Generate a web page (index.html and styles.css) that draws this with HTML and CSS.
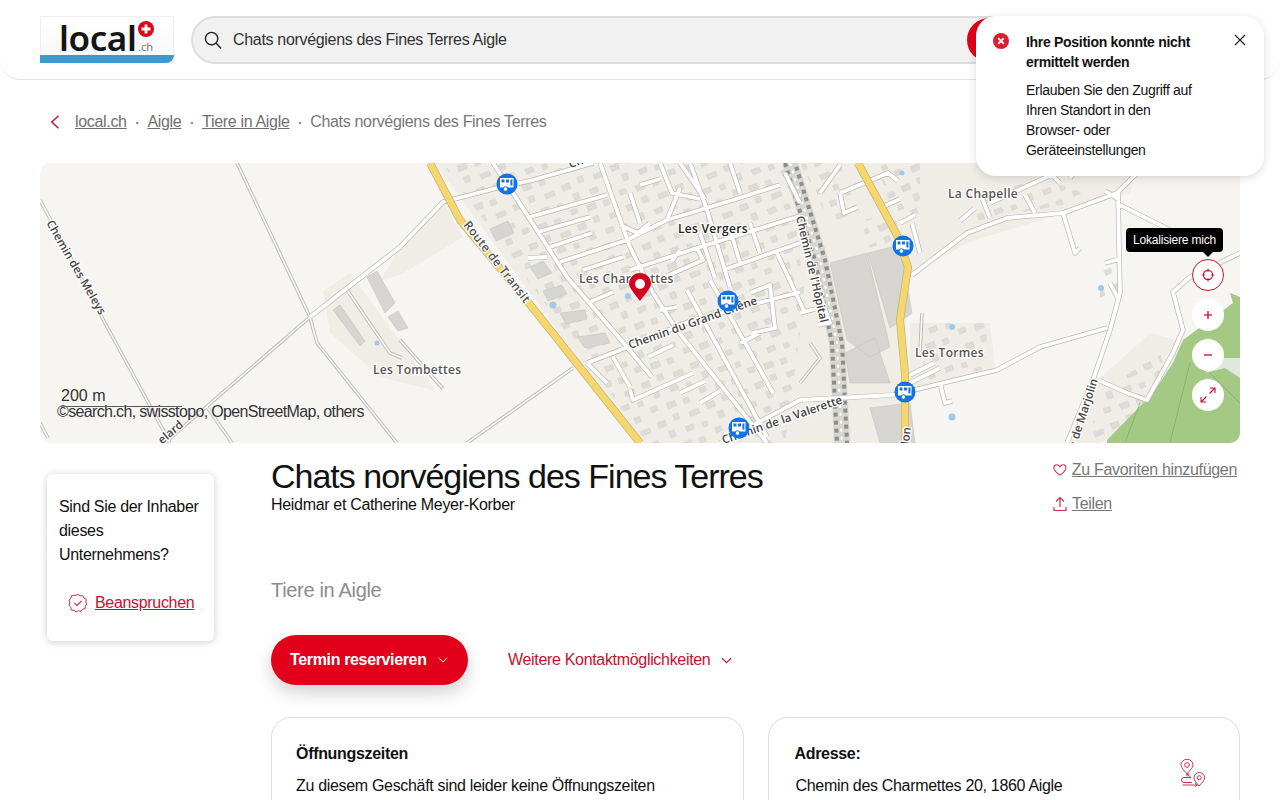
FILE: index.html
```html
<!DOCTYPE html>
<html lang="de">
<head>
<meta charset="utf-8">
<title>Chats norvégiens des Fines Terres</title>
<link rel="stylesheet" href="styles.css">
</head>
<body>
<header class="site-header">
  <a class="logo">
    <span class="logo-word">local</span><span class="logo-ch">.ch</span>
    <svg class="logo-cross" viewBox="0 0 16 16" width="16" height="16"><circle cx="8" cy="8" r="8" fill="#e2001a"/><path d="M6.6 3.5h2.8v3.1h3.1v2.8H9.4v3.1H6.6V9.4H3.5V6.6h3.1z" fill="#fff"/></svg>
    <span class="logo-band"></span>
  </a>
  <div class="search">
    <svg class="search-icon" viewBox="0 0 18 18" width="18" height="18"><circle cx="7.6" cy="7.6" r="6.2" fill="none" stroke="#222" stroke-width="1.4"/><path d="M12 12l5 5.4" stroke="#222" stroke-width="1.4" fill="none"/></svg>
    <span class="search-text">Chats norvégiens des Fines Terres Aigle</span>
    <span class="search-btn"></span>
  </div>
</header>

<nav class="crumbs">
  <svg class="crumb-back" viewBox="0 0 10 14" width="10" height="14"><path d="M8.5 .8L1.8 7l6.7 6.2" fill="none" stroke="#c8102e" stroke-width="1.4"/></svg>
  <a class="crumb-link">local.ch</a><span class="dot">•</span>
  <a class="crumb-link">Aigle</a><span class="dot">•</span>
  <a class="crumb-link">Tiere in Aigle</a><span class="dot">•</span>
  <span class="crumb-current">Chats norvégiens des Fines Terres</span>
</nav>

<section class="map">
  <svg class="map-svg" viewBox="0 0 1200 280" width="1200" height="280">
    <defs>
      <pattern id="blds" width="64" height="52" patternUnits="userSpaceOnUse" patternTransform="rotate(-22) scale(.82)">
        <g fill="#dedcd6" stroke="#cfcdc6" stroke-width=".6">
          <rect x="3" y="4" width="10" height="7"/><rect x="24" y="2" width="7" height="7"/><rect x="44" y="6" width="12" height="6"/>
          <rect x="12" y="19" width="7" height="8"/><rect x="33" y="21" width="10" height="6"/><rect x="54" y="24" width="6" height="6"/>
          <rect x="2" y="36" width="8" height="6"/><rect x="22" y="38" width="11" height="7"/><rect x="43" y="40" width="7" height="7"/>
        </g>
      </pattern>
      <path id="roads" d="M270 154L360 84M453 0L473 30L527 114L587 184L612 214M560 0L590 84L613 130L637 167L727 280M650 0L667 47L690 124M360 84L403 39L457 25L493 17L553 0M547 200L593 182L653 157L760 129M547 200L567 220M490 54L567 32M498 69L550 54M510 84L552 70M520 99L587 77L627 57L693 37L740 22M488 95L507 94M543 107L583 94M590 107L657 85L760 53M657 85L663 97L627 113M683 107L760 80M550 139L573 129M620 147L637 144M590 227L593 237L653 210M573 194L590 224M608 194L633 182M647 127L727 274M670 117L733 230M680 280L760 237L853 232L957 207L1000 184L1067 165M1078 30L1080 130L1070 167L1053 217L1027 280M872 112L927 70L967 55L1023 50L1077 30L1093 14M1080 42L1130 67L1170 90M1200 90L1150 114L1133 129L1143 167L1133 190L1107 237L1087 230L1058 217M1093 14L1110 0M590 30L600 60M620 0L632 30L660 36M690 0L700 30M627 57L640 25M780 30L800 2M745 10L760 40M800 30L848 10L858 18M800 30L804 50L818 44M842 44L860 36M860 60L875 52M880 90L872 60M1023 50L1035 90L1040 85M1040 0L1030 15M1000 0L1020 20M1065 28L1078 36M950 40L1020 8M985 32L995 50M920 58L935 45M950 55L940 30M1065 100L1080 96M1070 120L1078 135M870 220L900 205M870 212L894 200M900 220L905 240L912 238M760 150L775 146M780 132L790 160L778 162M737 90L765 150M675 115L660 70M700 100L690 66M720 90L710 60M632 98L640 87M610 60L598 70L580 62M600 22L620 16M640 0L665 36M700 180L720 170M640 230L665 218M660 240L680 228M710 130L730 122L735 165L712 170"/>
      <path id="thin" d="M0 37L7 50L65 160L127 274L130 280M197 0L270 154L277 180L357 280M270 154L143 264L125 280M167 244L192 280M427 280L533 205M305 124L350 190L362 195M360 177L403 226M0 260L8 275M770 180L780 195L760 220M880 190L882 150"/>
      <g id="bus">
        <circle r="10.5" fill="#1173e6"/>
        <path d="M-7-6H6.5V3.5H-7z" fill="#fff"/>
        <path d="M-5.5-4.5h3v3h-3zM-1-4.5h3v3h-3zM3.4-4.5H5.4v6H3.4z" fill="#1173e6"/>
        <circle cx="-1.5" cy="5" r="2.3" fill="#fff" stroke="#1173e6"/>
      </g>
    </defs>
    <rect width="1200" height="280" fill="#f6f5f2"/>
    <path class="area" d="M395 0L600 280H860L868 112L932 78L1090 30L1098 0z"/>
    <path class="area" d="M360 112L423 74L403 39L360 84L340 118zM283 128L310 110L396 228L340 214L290 170z"/>
    <path class="area" d="M870 160H950L955 205L880 225L870 230zM1058 217L1110 170L1150 180L1130 240L1060 280H1030z"/>
    <path d="M402 0L607 280H745L765 135L748 0zM800 0L830 85L862 75L836 0zM880 160H945L950 205L885 222zM925 60L1060 35L1000 15L950 30zM1060 100H1078V135H1060zM1060 230L1120 190L1130 225L1090 275H1050zM760 0H880V50L790 60z" fill="url(#blds)"/>
    <path class="bldg" d="M327 114L337 108L355 140L345 150zM293 147L300 142L325 178L320 183zM348 154L358 148L368 165L358 168z"/>
    <path class="bldg" d="M450 66L468 58L474 70L456 78zM490 104L503 98L512 110L498 116zM503 128L522 122L527 131L508 138zM520 150L545 147L547 156L526 161zM537 174L565 170L570 180L545 185z"/>
    <path class="bldg" d="M790 100L827 90L850 184L830 194L807 177zM828 90L860 82L872 150L850 165zM805 190L835 175L850 220L810 220zM830 245L870 240L875 280H840z"/>
    <circle cx="337" cy="180" r="2.5" fill="#9fc8ea"/><circle cx="513" cy="142" r="3.5" fill="#9fc8ea"/><circle cx="588" cy="133" r="3" fill="#9fc8ea"/><circle cx="912" cy="164" r="3" fill="#9fc8ea"/><circle cx="912" cy="254" r="3.5" fill="#9fc8ea"/><circle cx="1061" cy="125" r="3" fill="#9fc8ea"/><circle cx="862" cy="10" r="2.5" fill="#9fc8ea"/>

    <path class="green" d="M1200 134L1190 130L1193 140L1143 177L1133 200L1113 230L1067 277V280H1200z"/>
    <path d="M1100 240L1085 280M1150 200L1130 280M1170 210L1200 240" stroke="#7fa765" stroke-width=".7" fill="none"/>
    <path d="M1165 210L1185 205L1200 215V195L1180 195z" fill="#dfe7df"/>

    <path d="M750 0L780 97L797 180L802 280" fill="none" stroke="#d8d6d0" stroke-width="16"/>
    <path d="M745 0L775 97L792 180L797 280" fill="none" stroke="#8d8d8b" stroke-width="4" stroke-dasharray="4 4"/>
    <path d="M755 0L785 97L802 180L807 280" fill="none" stroke="#8d8d8b" stroke-width="4" stroke-dasharray="4 4" stroke-dashoffset="4"/>
    <path d="M750 0L780 97L797 180L802 280" fill="none" stroke="#fff" stroke-width="2" stroke-dasharray="3 5"/>

    <use href="#thin" class="thin-case"/><use href="#thin" class="thin-fill"/>
    <use href="#roads" class="road-case"/><use href="#roads" class="road-fill"/>

    <path class="y-case" d="M390 0L420 57L492 144L600 280"/><path class="y-fill" d="M390 0L420 57L492 144L600 280"/>
    <path class="y-case" d="M818 0L857 72L868 104L860 157L865 210L865 280"/><path class="y-fill" d="M818 0L857 72L868 104L860 157L865 210L865 280"/>

    <text class="label strong" x="638" y="70">Les Vergers</text>
    <text class="label" x="539" y="120">Les Charmettes</text>
    <text class="label" x="333" y="211">Les Tombettes</text>
    <text class="label" x="875" y="194">Les Tormes</text>
    <text class="label" x="908" y="35">La Chapelle</text>
    <text class="label road-label" transform="translate(530 5) rotate(-17)">Che</text>
    <text class="label" transform="translate(423 62) rotate(52)">Route de Transit</text>
    <text class="label road-label" transform="translate(590 186) rotate(-19.5)">Chemin du Grand Chêne</text>
    <text class="label road-label" transform="translate(756 54) rotate(77)">Chemin de l'Hôpital</text>
    <text class="label road-label" transform="translate(6 60) rotate(60)">Chemin des Meleys</text>
    <text class="label road-label anchor-end" transform="translate(803 240) rotate(-19)">Chemin de la Valerette</text>
    <text class="label road-label anchor-end" transform="translate(1058 217) rotate(-72)">Chemin de Marjolin</text>
    <text class="label road-label anchor-end" transform="translate(144 263) rotate(-40)">elard</text>
    <text class="label road-label" transform="translate(869 282) rotate(-84)">lon</text>

    <use href="#bus" x="467" y="21"/><use href="#bus" x="688" y="138"/><use href="#bus" x="699" y="265"/><use href="#bus" x="863" y="83"/><use href="#bus" x="865" y="229"/>

    <path d="M600 138C593 129 589 124 589 121A11 11 0 0 1 611 121C611 124 607 129 600 138z" fill="#d5001f"/>
    <circle cx="600" cy="121" r="5" fill="#fff"/>
  </svg>

  <div class="scale">200 m</div>
  <div class="attribution">©search.ch, swisstopo, OpenStreetMap, others</div>

  <div class="tooltip">Lokalisiere mich</div>
  <div class="map-controls">
    <button class="ctl ctl-locate"><svg viewBox="0 0 14 14" width="14" height="14"><circle cx="7" cy="7" r="4.6" fill="none" stroke="#c8102e" stroke-width="1.1"/><path d="M7 .8v3M7 10.2v3M.8 7h3M10.2 7h3" stroke="#c8102e" stroke-width="1.1"/></svg></button>
    <button class="ctl"><svg viewBox="0 0 10 10" width="10" height="10"><path d="M5 1v8M1 5h8" stroke="#d12c55" stroke-width="1.6"/></svg></button>
    <button class="ctl"><svg viewBox="0 0 10 10" width="10" height="10"><path d="M1 5h8" stroke="#d12c55" stroke-width="1.6"/></svg></button>
    <button class="ctl"><svg viewBox="0 0 16 16" width="16" height="16"><path d="M1 15L6.5 9.5M1 10v5h5M15 1L9.5 6.5M10 1h5v5" fill="none" stroke="#b8123c" stroke-width="1.1"/></svg></button>
  </div>
</section>

<main class="content">
  <aside class="side">
    <div class="claim">
      <p class="claim-text">Sind Sie der Inhaber dieses Unternehmens?</p>
      <a class="claim-link">
        <svg viewBox="0 0 20 20" width="20" height="20"><path d="M10 1.5l2.3 1.4 2.6-.2 1.1 2.4 2.3 1.3-.5 2.6L19 11l-1.7 2-.1 2.6-2.6.6L13 18.300l-2.700-.5-2.300 1.200-2-1.700-2.600-.200-.6-2.600L1 12l.8-2.500L1 7l2-1.700.4-2.600 2.700-.1z" fill="none" stroke="#c8304f" stroke-width="1"/><path d="M6.500 10l2.500 2.500 4.500-4.500" fill="none" stroke="#c8304f" stroke-width="1.100"/></svg>
        <span>Beanspruchen</span>
      </a>
    </div>
  </aside>
  <div class="main-col">
    <div class="title-row">
      <div>
        <h1 class="title">Chats norvégiens des Fines Terres</h1>
        <p class="owner">Heidmar et Catherine Meyer-Korber</p>
      </div>
      <div class="actions">
        <a class="action"><svg viewBox="0 0 16 14" width="15" height="14"><path d="M8 13C3 9.500 1 7.300 1 4.600 1 2.500 2.600 1 4.400 1 6 1 7.300 2 8 3.300 8.700 2 10 1 11.600 1 13.400 1 15 2.500 15 4.600 15 7.300 13 9.500 8 13z" fill="none" stroke="#c8304f" stroke-width="1.200"/></svg><span>Zu Favoriten hinzufügen</span></a>
        <a class="action"><svg viewBox="0 0 14 16" width="14" height="16"><path d="M7 11V1.500M3 5.500l4-4 4 4M1 11v3.500h12V11" fill="none" stroke="#c8304f" stroke-width="1.200"/></svg><span>Teilen</span></a>
      </div>
    </div>
    <p class="category">Tiere in Aigle</p>
    <div class="cta-row">
      <button class="cta">Termin reservieren<svg viewBox="0 0 10 6" width="10" height="6"><path d="M.8.8L5 5l4.200-4.200" fill="none" stroke="#fff" stroke-width="1"/></svg></button>
      <a class="more">Weitere Kontaktmöglichkeiten<svg viewBox="0 0 10 6" width="11" height="7"><path d="M.8.8L5 5l4.200-4.200" fill="none" stroke="#c8102e" stroke-width="1"/></svg></a>
    </div>
    <div class="cards">
      <div class="card">
        <h2 class="card-title">Öffnungszeiten</h2>
        <p class="card-text">Zu diesem Geschäft sind leider keine Öffnungszeiten verfügbar.</p>
      </div>
      <div class="card card-address">
        <div>
          <h2 class="card-title">Adresse:</h2>
          <p class="card-text">Chemin des Charmettes 20, 1860 Aigle</p>
        </div>
        <svg class="route-icon" viewBox="0 0 28 28" width="28" height="28"><g fill="none" stroke="#c8304f" stroke-width="1"><path d="M8 15C4.500 10.500 2 8.500 2 5.800A6 5.500 0 0 1 14 5.800C14 8.500 11.500 10.500 8 15z"/><circle cx="8" cy="6" r="2.300"/><path d="M20 27C17 23 15 21.500 15 18.800A5.300 5.300 0 0 1 25.600 18.800C25.600 21.500 23.500 23 20 27z"/><circle cx="20.300" cy="18.700" r="2"/><path d="M8 15L12 18.500H5A2 2 0 0 0 5 23.500H13M8 17.500V15H10.500M3.500 26H18M16 24l2.500 2-2.500 1.500"/></g></svg>
      </div>
    </div>
  </div>
</main>

<aside class="toast">
  <svg class="toast-icon" viewBox="0 0 16 16" width="16" height="16"><circle cx="8" cy="8" r="8" fill="#d9202f"/><path d="M5.200 5.200l5.600 5.600M10.800 5.200l-5.600 5.600" stroke="#fff" stroke-width="1.700"/></svg>
  <div class="toast-body">
    <strong class="toast-title">Ihre Position konnte nicht ermittelt werden</strong>
    <p class="toast-text">Erlauben Sie den Zugriff auf Ihren Standort in den Browser- oder Geräteeinstellungen</p>
  </div>
  <svg class="toast-close" viewBox="0 0 12 12" width="12" height="12"><path d="M1 1l10 10M11 1L1 11" stroke="#222" stroke-width="1.300"/></svg>
</aside>
</body>
</html>
```
FILE: styles.css
```css
* { box-sizing: border-box; }
html, body { margin: 0; height: 800px; overflow: hidden; background: #fff; }
body { font-family: "Liberation Sans", Arial, sans-serif; font-size: 16px; color: #111; position: relative; letter-spacing: -0.32px; }
p, h1, h2 { margin: 0; }
a { color: inherit; }

.site-header { height: 80px; padding: 16px 40px 0; display: flex; gap: 17px; align-items: flex-start; background: #fff; border-bottom: 1px solid #e2e2e2; border-radius: 0 0 20px 20px; }
.logo { position: relative; width: 134px; height: 47px; flex: none; background: linear-gradient(#fff, #f7f7f7); box-shadow: inset 0 0 0 1px #eee; display: block; letter-spacing: 0; overflow: hidden; }
.logo-word { position: absolute; left: 19px; top: -1px; font-family: "Noto Sans", sans-serif; font-weight: 600; font-size: 35px; line-height: 46px; color: #151515; letter-spacing: -.4px; }
.logo-ch { position: absolute; left: 98px; top: 24px; font-family: "Noto Sans", sans-serif; font-size: 11px; line-height: 14px; color: #777; }
.logo-cross { position: absolute; left: 98px; top: 5px; }
.logo-band { position: absolute; left: 0; right: 0; bottom: 0; height: 8px; background: #3a9ad1; border-radius: 0 0 10px 0; }

.search { flex: 1; height: 48px; margin-right: 225px; display: flex; align-items: center; padding-left: 11px; background: #f1f1f1; border: 2px solid #dedede; border-radius: 24px; position: relative; }
.search-icon { flex: none; margin-right: 11px; }
.search-text { color: #333; }
.search-btn { position: absolute; right: 2px; top: 0; width: 44px; height: 44px; border-radius: 50%; background: #e2001a; }

.crumbs { height: 83px; padding: 1px 0 0 50px; display: flex; align-items: center; color: #6f6f6f; }
.crumb-back { margin-right: 15px; }
.crumb-link { text-decoration: underline; }
.dot { font-size: 8px; width: 20.7px; text-align: center; color: #777; }
.crumb-current { color: #777; }

.map { position: relative; margin: 0 40px; width: 1200px; height: 280px; border-radius: 10px; overflow: hidden; }
.map-svg { display: block; }
.area { fill: #efede6; }
.bldg { fill: #d6d5d1; stroke: #c6c5c1; stroke-width: .6; }
.green { fill: #a3c985; }
.thin-case { fill: none; stroke: #bdbcb7; stroke-width: 3.6; }
.thin-fill { fill: none; stroke: #fafafa; stroke-width: 1.6; }
.road-case { fill: none; stroke: #b9b8b3; stroke-width: 5.2; stroke-linejoin: round; }
.road-fill { fill: none; stroke: #fff; stroke-width: 3.8; stroke-linejoin: round; }
.y-case { fill: none; stroke: #c9b36d; stroke-width: 8; }
.y-fill { fill: none; stroke: #f6d76f; stroke-width: 6.5; }
.label { font-family: "Open Sans", sans-serif; font-size: 12px; font-weight: 600; fill: #555; stroke: #fff; stroke-width: 2.5px; paint-order: stroke; letter-spacing: .3px; }
.road-label { font-size: 11.5px; letter-spacing: 0; fill: #444; }
.strong { fill: #222; }
.anchor-end { text-anchor: end; }

.scale { position: absolute; left: 21px; top: 224px; width: 121px; height: 20px; font-size: 16px; line-height: 18px; color: #333; border-bottom: 1px solid #555; letter-spacing: 0; }
.attribution { position: absolute; left: 17px; top: 240px; font-size: 16px; line-height: 18px; color: #333; text-shadow: 0 0 2px #fff; letter-spacing: -0.65px; }

.tooltip { position: absolute; left: 1086px; top: 65px; width: 97px; height: 24px; background: #000; color: #fff; border-radius: 4px; font-size: 12px; line-height: 24px; text-align: center; letter-spacing: -.2px; }
.tooltip::after { content: ""; position: absolute; left: 77px; top: 24px; border: 5px solid transparent; border-top-color: #000; border-bottom-width: 0; }
.map-controls { position: absolute; right: 16px; top: 96px; display: flex; flex-direction: column; gap: 8px; }
.ctl { width: 32px; height: 32px; padding: 0; border: 0; border-radius: 50%; background: #fff; display: flex; align-items: center; justify-content: center; }
.ctl-locate { border: 1px solid #c8102e; }

.content { display: flex; padding: 14px 40px 0 47px; }
.side { width: 224px; flex: none; padding-top: 17px; }
.claim { width: 167px; height: 167px; padding: 21px 12px 0; background: #fff; border-radius: 6px; box-shadow: 0 1px 8px rgba(0,0,0,.2); }
.claim-text { line-height: 24px; }
.claim-link { display: flex; align-items: center; gap: 7px; margin: 26px 0 0 9px; color: #c8102e; text-decoration: underline; }

.main-col { flex: 1; min-width: 0; }
.title-row { display: flex; justify-content: space-between; height: 111px; }
.title { font-size: 34px; font-weight: 400; line-height: 38px; letter-spacing: -1px; }
.owner { line-height: 18px; margin-top: 1px; }
.actions { flex: none; display: flex; flex-direction: column; gap: 16px; padding: 4px 3px 0 0; width: 187px; }
.action { display: flex; align-items: center; gap: 5px; height: 18px; color: #777; white-space: nowrap; }
.action span { text-decoration: underline; }
.category { font-size: 20px; line-height: 24px; color: #8c8c8c; margin-top: 10px; }
.cta-row { display: flex; align-items: center; gap: 40px; margin-top: 33px; }
.cta { width: 197px; height: 50px; padding: 0 0 0 19px; border: 0; border-radius: 25px; background: #e2001a; color: #fff; font: bold 16px "Liberation Sans", Arial, sans-serif; letter-spacing: -.35px; display: flex; align-items: center; gap: 11px; box-shadow: 0 8px 18px rgba(0,0,0,.18); }
.more { display: flex; align-items: center; gap: 11px; color: #c8102e; }
.cards { display: grid; grid-template-columns: 1fr 1fr; gap: 24px; margin-top: 32px; }
.card { min-width: 0; height: 200px; padding: 27px 24px 0; border: 1px solid #ddd; border-radius: 20px; }
.card-address { display: flex; justify-content: space-between; padding: 27px 32px 0 26px; }
.card-title { font-size: 16px; line-height: 18px; font-weight: 700; }
.card-text { line-height: 24px; margin-top: 11px; }
.card-address .card-text { margin-left: 1px; }
.route-icon { margin-top: 14px; flex: none; }

.toast { position: absolute; left: 976px; top: 16px; width: 288px; height: 160px; padding: 16px 17px; background: #fff; border-radius: 20px; box-shadow: 0 2px 10px rgba(0,0,0,.14); display: flex; font-size: 14px; letter-spacing: -.3px; line-height: 20px; }
.toast-icon { flex: none; margin: 1px 17px 0 0; }
.toast-body { width: 175px; }
.toast-title { display: block; font-weight: 700; }
.toast-text { margin-top: 8px; }
.toast-close { flex: none; margin: 2px 0 0 33px; }
```
